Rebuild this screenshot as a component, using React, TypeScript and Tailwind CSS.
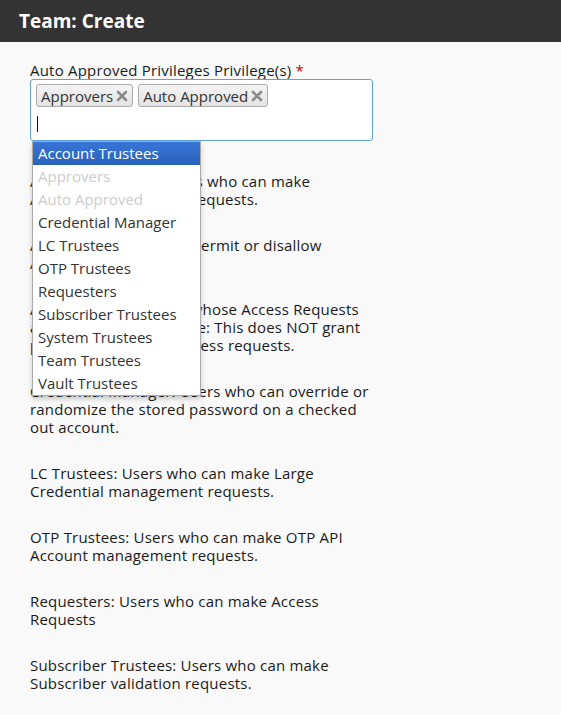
import React from "react";

const options: { label: string; state: "hl" | "dis" | "norm" }[] = [
  { label: "Account Trustees", state: "hl" },
  { label: "Approvers", state: "dis" },
  { label: "Auto Approved", state: "dis" },
  { label: "Credential Manager", state: "norm" },
  { label: "LC Trustees", state: "norm" },
  { label: "OTP Trustees", state: "norm" },
  { label: "Requesters", state: "norm" },
  { label: "Subscriber Trustees", state: "norm" },
  { label: "System Trustees", state: "norm" },
  { label: "Team Trustees", state: "norm" },
  { label: "Vault Trustees", state: "norm" },
];

const descriptions = [
  "Account Trustees: Users who can make Account management requests.",
  "Approvers: Users who permit or disallow Access Requests.",
  "Auto Approved: Users whose Access Requests are auto approved. Note: This does NOT grant privilege to approve access requests.",
  "Credential Manager: Users who can override or randomize the stored password on a checked out account.",
  "LC Trustees: Users who can make Large Credential management requests.",
  "OTP Trustees: Users who can make OTP API Account management requests.",
  "Requesters: Users who can make Access Requests",
  "Subscriber Trustees: Users who can make Subscriber validation requests.",
];

function Tag({ text }: { text: string }) {
  return (
    <div className="flex items-center h-[23px] pl-[4px] pr-[4px] border border-[#aaaaaa] rounded-[3px] bg-gradient-to-b from-[#f4f4f4] to-[#e4e4e4] text-[#333] text-[15px] leading-[18px]">
      <span>{text}</span>
      <svg width="12" height="12" viewBox="0 0 12 12" className="ml-[3px]">
        <path d="M2 2 L10 10 M10 2 L2 10" stroke="#8a8a8a" strokeWidth="2.6" strokeLinecap="round" />
      </svg>
    </div>
  );
}

export default function App() {
  return (
    <div className="min-h-[715px] bg-[#f9f9f9]" style={{ fontFamily: '"Open Sans", sans-serif' }}>
      <div className="h-[42px] bg-[#333333] flex items-center pl-[19px]">
        <h1 className="text-white text-[19px] font-bold leading-none">Team: Create</h1>
      </div>
      <div className="pl-[30px] w-[400px] text-[#1a1a1a]">
        <div className="mt-[19px] text-[15px] leading-[18px] tracking-[0.2px]">
          Auto Approved Privileges Privilege(s) <span className="text-[#cc0000]">*</span>
        </div>
        <div className="relative">
          <div className="w-[343px] h-[62px] bg-white border border-[#5ea4d8] rounded-[3px] px-[5px] pt-[4px]">
            <div className="flex gap-[5px]">
              <Tag text="Approvers" />
              <Tag text="Auto Approved" />
            </div>
            <div className="mt-[9px] ml-[1px] w-[1px] h-[16px] bg-[#111]" />
          </div>
          <div className="absolute left-[2px] top-[62px] w-[169px] bg-white border border-[#aaaaaa] shadow-[0_3px_5px_rgba(0,0,0,0.2)] z-10">
            {options.map((o) => (
              <div
                key={o.label}
                className={
                  "h-[23px] pl-[5px] text-[15px] leading-[23px] whitespace-nowrap " +
                  (o.state === "hl"
                    ? "bg-gradient-to-b from-[#3875d7] to-[#2a62bc] text-white"
                    : o.state === "dis"
                    ? "text-[#cccccc]"
                    : "text-[#333]")
                }
              >
                {o.label}
              </div>
            ))}
          </div>
        </div>
        <div className="mt-[31px] w-[340px]">
          {descriptions.map((d) => (
            <p key={d} className="text-[15px] leading-[18px] mb-[28px] tracking-[0.2px]">
              {d}
            </p>
          ))}
        </div>
      </div>
    </div>
  );
}
